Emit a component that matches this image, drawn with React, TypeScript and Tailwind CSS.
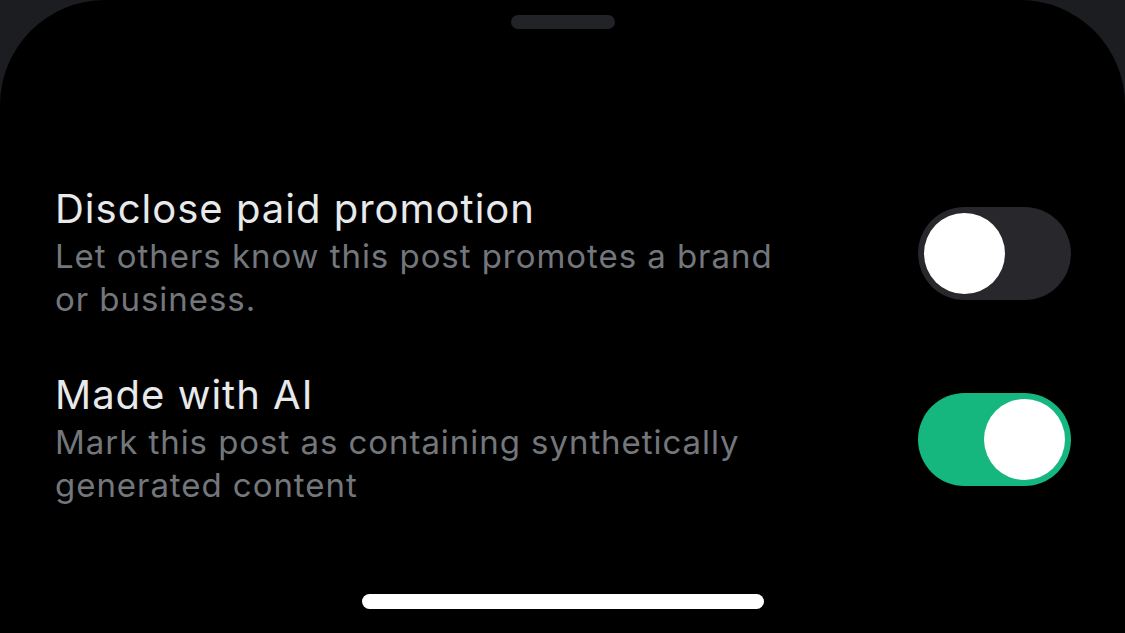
import React, { useState } from 'react';

const settings = [
  {
    id: 'paid',
    title: 'Disclose paid promotion',
    description: 'Let others know this post promotes a brand or business.',
  },
  {
    id: 'ai',
    title: 'Made with AI',
    description: 'Mark this post as containing synthetically generated content',
  },
];

const Toggle = ({ on, onClick }: { on: boolean; onClick: () => void }) => (
  <button
    onClick={onClick}
    className={`flex h-[93px] w-[153px] shrink-0 items-center rounded-full p-[6px] ${
      on ? 'justify-end bg-[#16b67f]' : 'justify-start bg-[#28282c]'
    }`}
  >
    <span className="block h-[81px] w-[81px] rounded-full bg-white" />
  </button>
);

const App = () => {
  const [state, setState] = useState<Record<string, boolean>>({ paid: false, ai: true });

  return (
    <div
      className="h-[633px] w-[1125px] overflow-hidden bg-[#1c1d20]"
      style={{ fontFamily: 'Inter, "Noto Sans", sans-serif' }}
    >
      <div className="flex h-full flex-col rounded-t-[105px] bg-black">
        {/* Grabber */}
        <div className="flex justify-center pt-[15px]">
          <div className="h-[14px] w-[104px] rounded-full bg-[#222327]" />
        </div>

        {/* Settings */}
        <div className="mt-[157px] flex flex-col gap-[51px] pl-[55px] pr-[54px]">
          {settings.map((s) => (
            <div key={s.id} className="flex items-center justify-between">
              <div className="max-w-[740px]">
                <div className="text-[40px] leading-[46px] tracking-[1px] text-[#e7e9ea]">{s.title}</div>
                <div className="mt-[3px] text-[33px] leading-[43px] tracking-[0.95px] text-[#73777c]">
                  {s.description}
                </div>
              </div>
              <Toggle
                on={state[s.id]}
                onClick={() => setState((p) => ({ ...p, [s.id]: !p[s.id] }))}
              />
            </div>
          ))}
        </div>

        {/* Home indicator */}
        <div className="mt-auto flex justify-center pb-[24px]">
          <div className="h-[15px] w-[402px] rounded-full bg-white" />
        </div>
      </div>
    </div>
  );
};

export default App;
